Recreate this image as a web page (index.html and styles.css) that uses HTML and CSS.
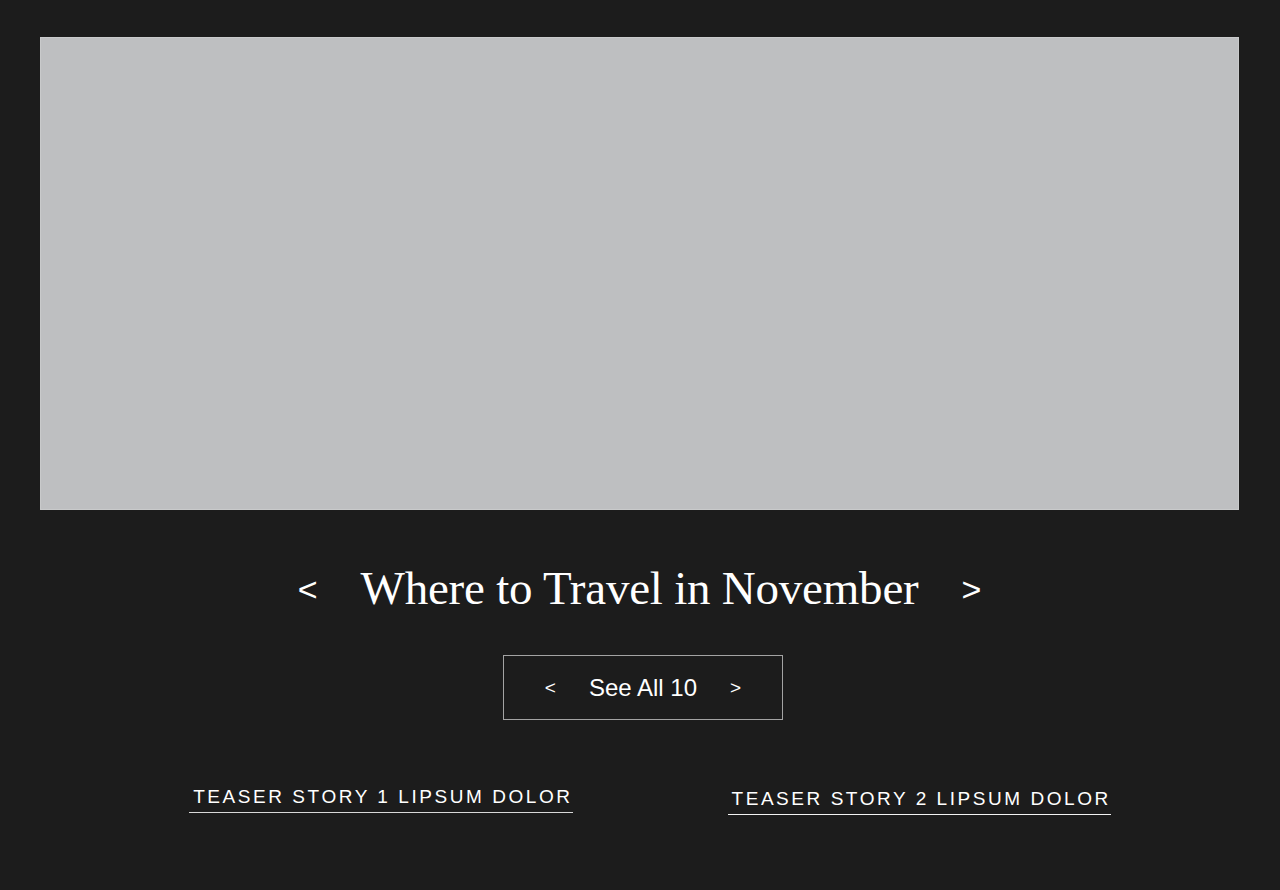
FILE: index.html
```html
<!DOCTYPE html>
<html lang="en">
<head>
<meta charset="utf-8">
<title>Where to Travel in November</title>
<link rel="stylesheet" href="styles.css">
</head>
<body>
<main class="page">
  <div class="hero-image" role="img" aria-label="Placeholder image"></div>

  <div class="title-row">
    <span class="arrow arrow-lg">&lt;</span>
    <h1 class="title">Where to Travel in November</h1>
    <span class="arrow arrow-lg">&gt;</span>
  </div>

  <a class="see-all" href="#">
    <span class="arrow arrow-sm">&lt;</span>
    <span class="see-all-label">See All 10</span>
    <span class="arrow arrow-sm">&gt;</span>
  </a>

  <div class="teasers">
    <a class="teaser" href="#">TEASER STORY 1 LIPSUM DOLOR</a>
    <a class="teaser teaser-low" href="#">TEASER STORY 2 LIPSUM DOLOR</a>
  </div>
</main>
</body>
</html>
```

FILE: styles.css
```css
html, body {
  margin: 0;
  padding: 0;
  background: #1c1c1c;
}

body {
  font-family: "Liberation Sans", Arial, sans-serif;
  color: #ffffff;
  height: 890px;
  overflow: hidden;
}

.page {
  display: flex;
  flex-direction: column;
  align-items: center;
  padding: 37px 41px 0 40px;
}

.hero-image {
  align-self: stretch;
  height: 471px;
  background: #bebfc1;
  border: 1px solid #c9cacb;
}

.title-row {
  display: flex;
  align-items: center;
  justify-content: center;
  gap: 43px;
  margin-top: 50px;
  height: 56px;
}

.title {
  margin: 0;
  font-family: "Liberation Serif", "Times New Roman", serif;
  font-weight: 400;
  font-size: 47px;
  line-height: 56px;
  letter-spacing: -0.22px;
  white-space: nowrap;
}

.arrow {
  font-family: "Liberation Sans", Arial, sans-serif;
  font-weight: 400;
  color: #ffffff;
}

.arrow-lg {
  font-size: 34px;
  line-height: 56px;
  position: relative;
  top: 1px;
}

.arrow-sm {
  font-size: 19px;
  line-height: 24px;
}

.see-all {
  display: flex;
  align-items: center;
  justify-content: center;
  gap: 33px;
  box-sizing: border-box;
  width: 280px;
  height: 65px;
  margin-top: 39px;
  margin-left: 7px;
  padding: 0;
  border: 1px solid #a3a3a3;
  color: #ffffff;
  text-decoration: none;
  white-space: nowrap;
}

.see-all > span {
  flex-shrink: 0;
}

.see-all-label {
  font-size: 24px;
  line-height: 28px;
}

.teasers {
  display: flex;
  align-items: flex-start;
  justify-content: center;
  gap: 155px;
  margin-top: 65px;
  padding-left: 21px;
}

.teaser {
  display: block;
  font-size: 19px;
  line-height: 24px;
  letter-spacing: 2.55px;
  color: #ffffff;
  text-decoration: none;
  white-space: nowrap;
  padding: 0 0 3px 4px;
  border-bottom: 1px solid #d8d8d8;
}

.teaser-low {
  margin-top: 2px;
  border-bottom-color: #f2f2f2;
}
```
